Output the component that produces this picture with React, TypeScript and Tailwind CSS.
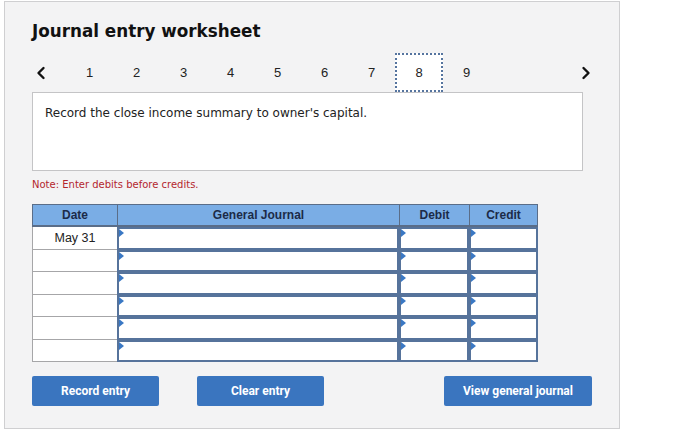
import React from 'react';

const Chevron: React.FC<{ dir: 'left' | 'right' }> = ({ dir }) => (
  <svg width="10" height="14" viewBox="0 0 10 14">
    <polyline
      points={dir === 'left' ? '7.5,2 2.5,7 7.5,12' : '2.5,2 7.5,7 2.5,12'}
      fill="none"
      stroke="#111"
      strokeWidth="2.4"
      strokeLinecap="round"
      strokeLinejoin="round"
    />
  </svg>
);

const InputCell: React.FC = () => (
  <div className="relative h-full bg-white border-2 border-[#56739b]">
    <span className="absolute left-0 top-0 w-0 h-0 border-t-[4px] border-b-[4px] border-l-[5px] border-t-transparent border-b-transparent border-l-[#3a78c4]" />
  </div>
);

const App: React.FC = () => {
  const steps = [1, 2, 3, 4, 5, 6, 7, 8, 9];
  const rows = ['May 31', '', '', '', '', ''];

  return (
    <div className="w-[700px] h-[434px] bg-white pt-[1px] pl-[4px]" style={{ fontFamily: '"DejaVu Sans", Verdana, sans-serif' }}>
      <div className="w-[616px] h-[428px] bg-[#f3f3f4] border border-[#cfcfd1] pl-[27px] pr-[35px]">
        <h1 className="mt-[19px] text-[16.8px] leading-[20px] font-bold text-[#111]">Journal entry worksheet</h1>

        <div className="mt-[12px] flex items-center h-[39px] text-[13px] text-[#222]" style={{ fontFamily: '"Liberation Sans", Arial, sans-serif' }}>
          <div className="w-[34px] flex justify-center pl-[2px] -ml-[9px] mr-[9px]">
            <Chevron dir="left" />
          </div>
          {steps.map((n) =>
            n === 8 ? (
              <div key={n} className="w-[48px] h-[39px] flex items-center justify-center bg-white border-2 border-dotted border-[#55749f]">
                {n}
              </div>
            ) : (
              <div key={n} className="w-[47px] flex justify-center">{n}</div>
            )
          )}
          <div className="flex-1" />
          <div className="w-[12px] flex justify-center -mr-[8px]">
            <Chevron dir="right" />
          </div>
        </div>

        <div className="w-[551px] h-[79px] bg-white border border-[#c4c4c6] px-[12px] pt-[11px] text-[12px] text-[#222]">
          Record the close income summary to owner's capital.
        </div>

        <p className="mt-[8px] text-[10px] leading-[12px] text-[#b3262d]">Note: Enter debits before credits.</p>

        <div className="mt-[13px] w-[506px] grid grid-cols-[85px_282px_70px_69px] text-[12px]" style={{ fontFamily: '"Liberation Sans", Arial, sans-serif' }}>
          {['Date', 'General Journal', 'Debit', 'Credit'].map((h, i) => (
            <div
              key={h}
              className={`h-[23px] flex items-center justify-center bg-[#7aade5] font-bold text-[#1c2b48] border-t border-b-2 border-l border-[#5a6d88] ${i === 3 ? 'border-r' : ''}`}
            >
              {h}
            </div>
          ))}
          {rows.map((d, r) => {
            const h = r % 2 === 0 ? 'h-[23px]' : 'h-[22px]';
            return (
              <React.Fragment key={r}>
                <div className={`${h} flex items-center justify-center bg-white border-l border-b border-[#a6a6a8] text-[12.5px] text-[#222]`}>
                  {d}
                </div>
                <div className={h}><InputCell /></div>
                <div className={h}><InputCell /></div>
                <div className={h}><InputCell /></div>
              </React.Fragment>
            );
          })}
        </div>

        <div className="mt-[14px] flex items-center text-[12px] font-bold text-white" style={{ fontFamily: 'Roboto, "Liberation Sans", sans-serif' }}>
          <button className="w-[127px] h-[30px] bg-[#3a75bf] rounded-[2px]">Record entry</button>
          <button className="ml-[38px] w-[127px] h-[30px] bg-[#3a75bf] rounded-[2px]">Clear entry</button>
          <button className="ml-auto -mr-[8px] w-[148px] h-[30px] bg-[#3a75bf] rounded-[2px]">View general journal</button>
        </div>
      </div>
    </div>
  );
};

export default App;
